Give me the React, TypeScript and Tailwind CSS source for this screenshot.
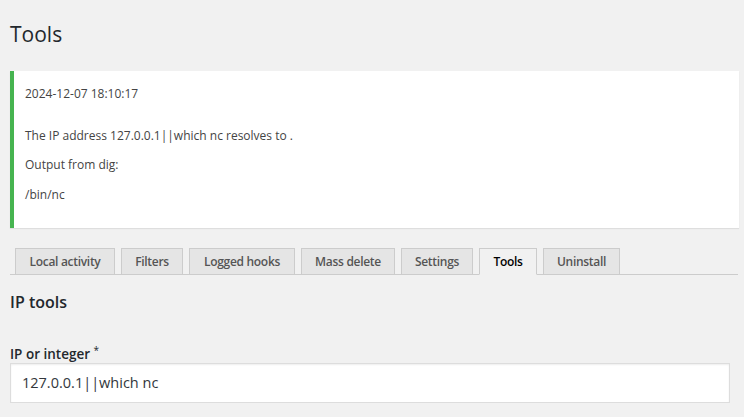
const tabs = [
  { label: "Local activity", w: "w-[100px]" },
  { label: "Filters", w: "w-[62px]" },
  { label: "Logged hooks", w: "w-[106px]" },
  { label: "Mass delete", w: "w-[94px]" },
  { label: "Settings", w: "w-[72px]" },
  { label: "Tools", w: "w-[58px]" },
  { label: "Uninstall", w: "w-[77px]" },
];

function App() {
  return (
    <div
      className="min-h-screen w-full bg-[#f1f1f1] pl-[10px] pr-[5px] text-[#444]"
      style={{ fontFamily: '"Open Sans", "Noto Sans", sans-serif' }}
    >
      <h1 className="pt-[20px] text-[21px] leading-[29px] font-normal text-[#23282d]">
        Tools
      </h1>

      <div className="mt-[22px] bg-white border-l-4 border-[#46b450] shadow-[0_1px_1px_rgba(0,0,0,0.08)] pl-[11px] pt-[13px] pb-[23px] text-[12px] leading-[20px]">
        <p className="h-[20px]">2024-12-07 18:10:17</p>
        <p className="mt-[22px]">The IP address 127.0.0.1||which nc resolves to .</p>
        <p className="mt-[9px]">Output from dig:</p>
        <p className="mt-[10px]">/bin/nc</p>
      </div>

      <div className="mt-[20px] flex gap-[6px] pl-[5px] border-b border-[#ccc] mr-[1px]">
        {tabs.map((t) =>
          t.label === "Tools" ? (
            <div
              key={t.label}
              className={`${t.w} h-[27px] -mb-px flex items-center justify-center border border-[#ccc] border-b-[#f1f1f1] bg-[#f1f1f1] text-[12px] tracking-[-0.3px] font-semibold text-black`}
            >
              {t.label}
            </div>
          ) : (
            <div
              key={t.label}
              className={`${t.w} h-[27px] -mb-px flex items-center justify-center border border-[#ccc] bg-[#e5e5e5] text-[12px] tracking-[-0.3px] font-semibold text-[#555]`}
            >
              {t.label}
            </div>
          )
        )}
      </div>

      <h2 className="mt-[15px] text-[16px] leading-[24px] font-semibold text-[#23282d]">
        IP tools
      </h2>

      <label className="mt-[32px] block text-[13.5px] leading-[17px] font-semibold text-[#23282d]">
        IP or integer <sup className="text-[10px] font-normal">*</sup>
      </label>

      <div className="mt-0 mr-[9px] h-[40px] bg-white border border-[#ddd] shadow-[inset_0_1px_2px_rgba(0,0,0,0.07)] flex items-center pl-[11px] text-[14.5px] text-[#32373c]">
        127.0.0.1||which nc
      </div>
    </div>
  );
}

export default App;
